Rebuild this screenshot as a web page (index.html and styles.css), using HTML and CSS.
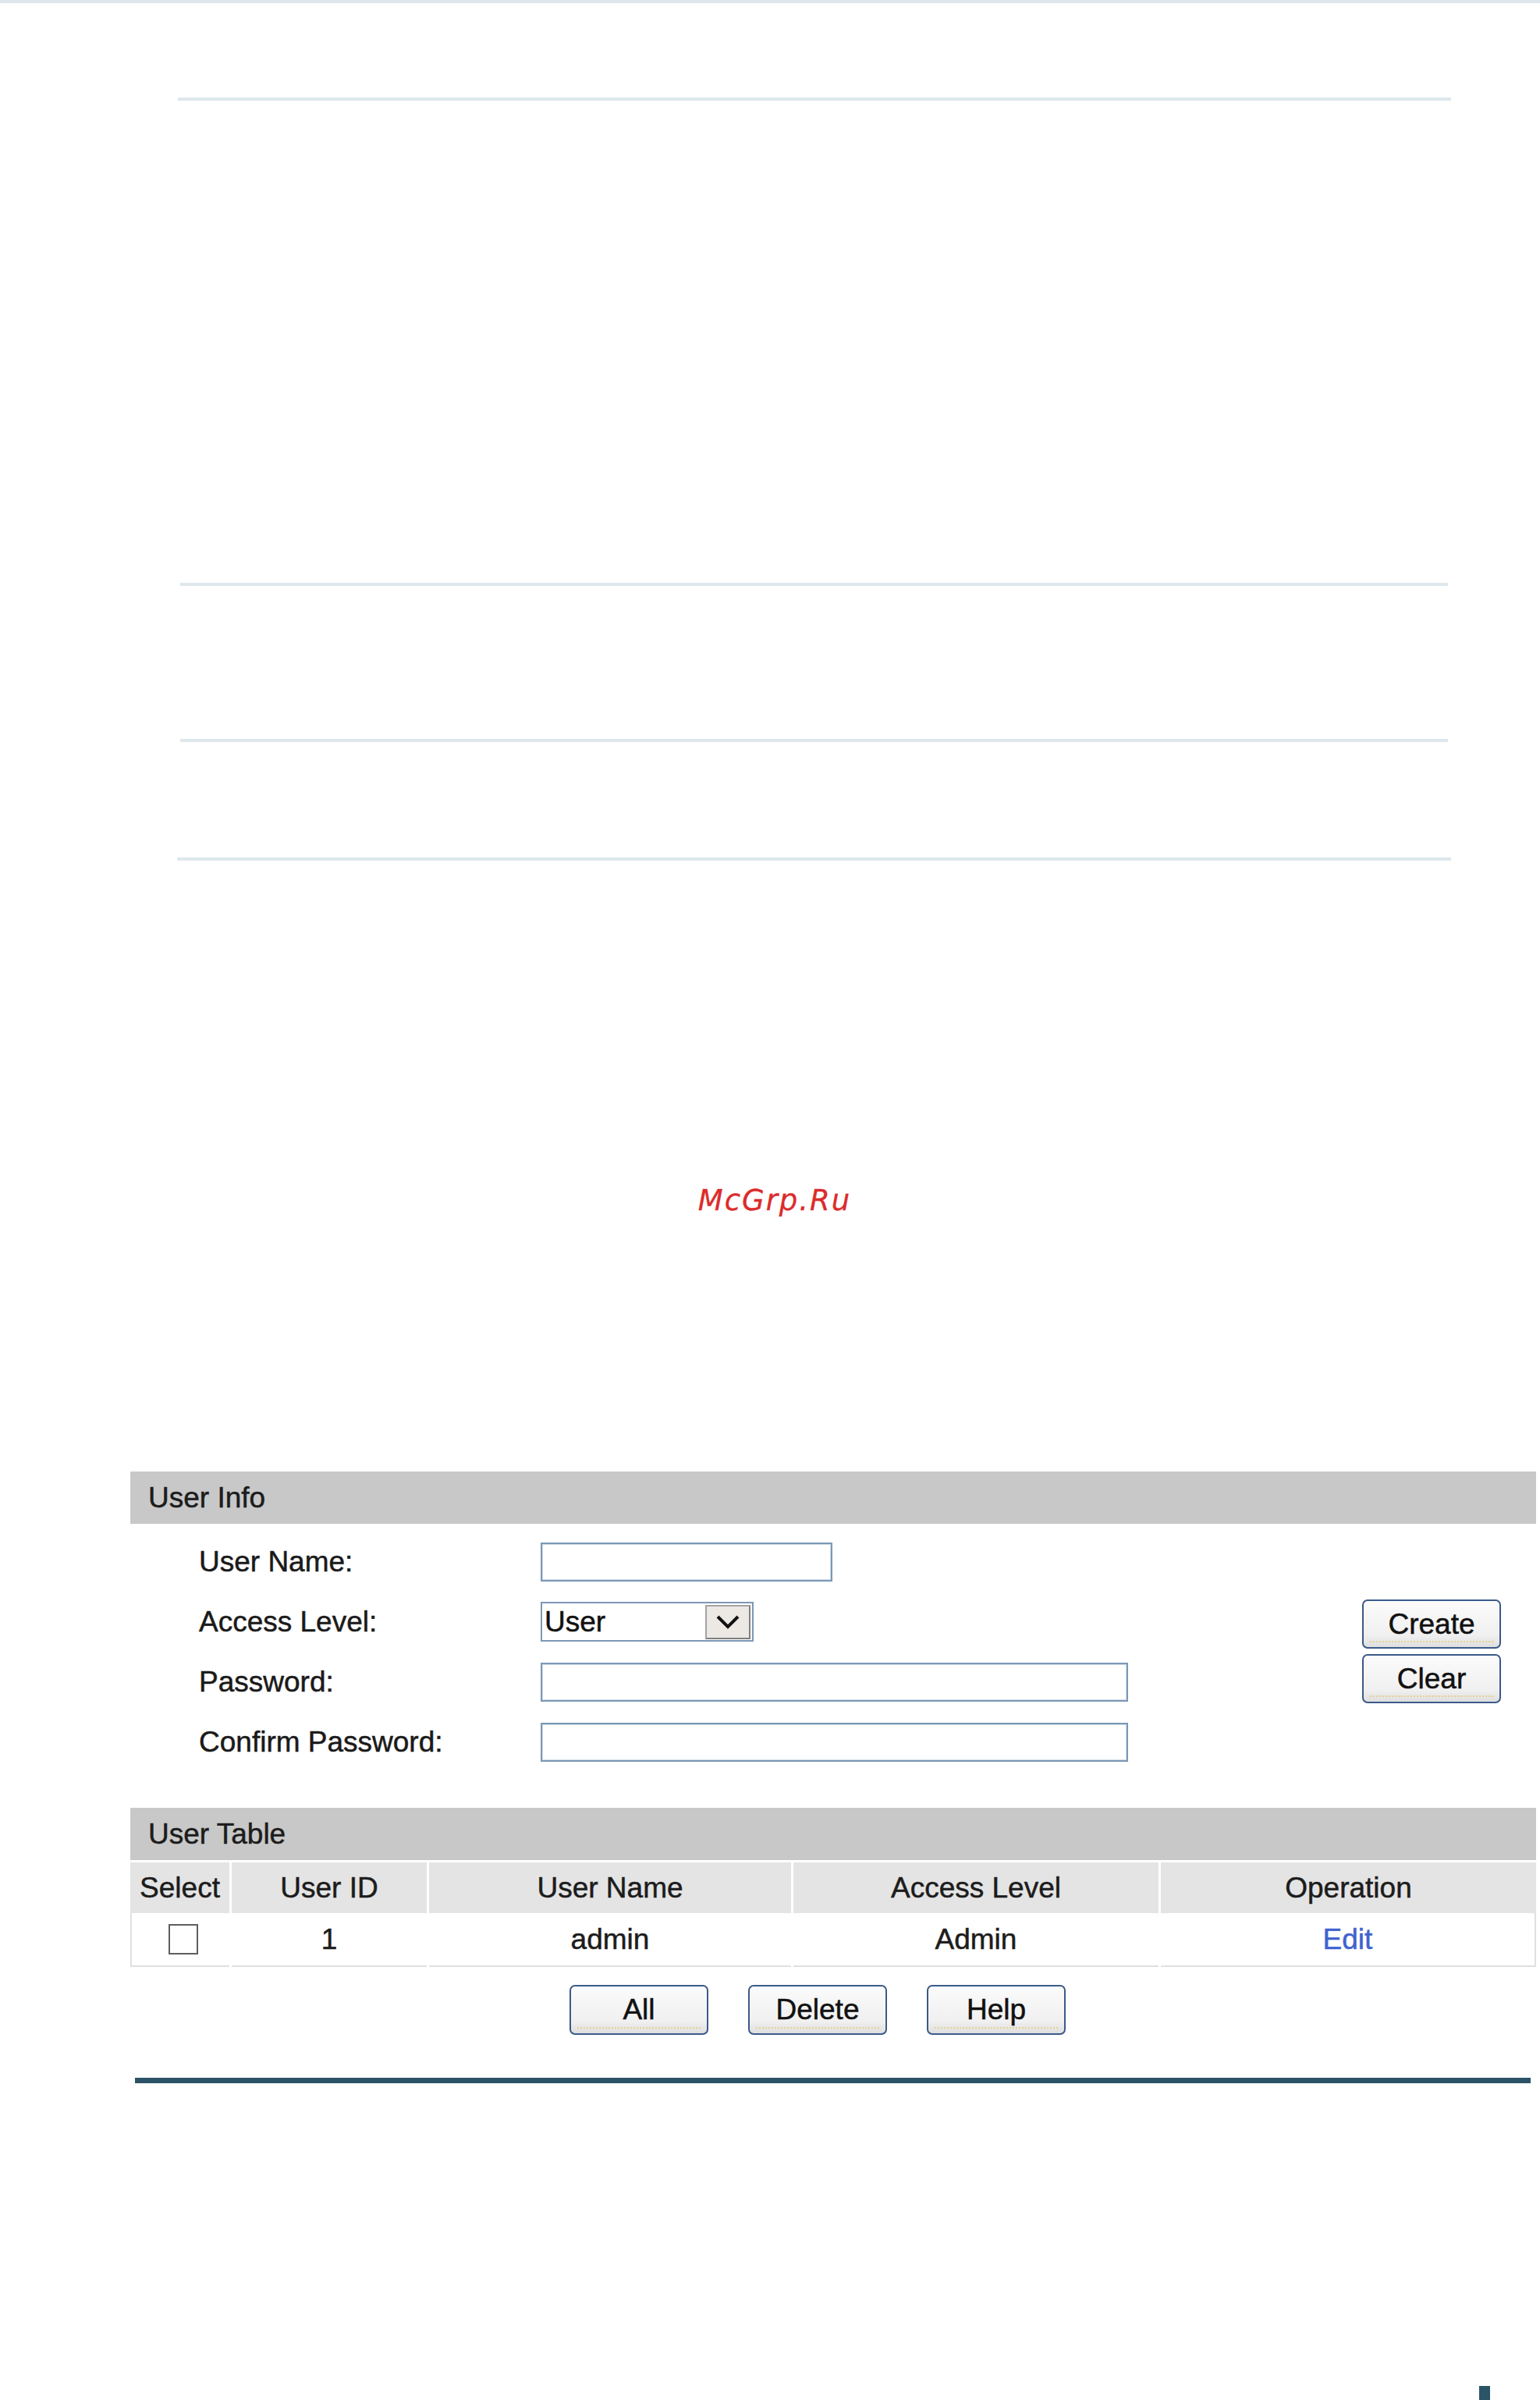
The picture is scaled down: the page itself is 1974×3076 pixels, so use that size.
FILE: index.html
```html
<!DOCTYPE html>
<html lang="en">
<head>
<meta charset="utf-8">
<title>User Config</title>
<link rel="stylesheet" href="styles.css">
</head>
<body>
<div class="page">
  <div class="topline"></div>
  <div class="rule rule-a"></div>
  <div class="rule rule-b"></div>
  <div class="rule rule-c"></div>
  <div class="rule rule-d"></div>
  <div class="watermark">McGrp.Ru</div>

  <div class="panel">
    <div class="bar">User Info</div>
    <div class="info">
      <div class="form">
        <div class="label">User Name:</div>
        <div class="field"><div class="input w-name"></div></div>
        <div class="label">Access Level:</div>
        <div class="field">
          <div class="select">
            <span class="select-text">User</span>
            <span class="select-arrow">
              <svg width="30" height="18" viewBox="0 0 30 18"><polyline points="2,2 15,15 28,2" fill="none" stroke="#111" stroke-width="4"/></svg>
            </span>
          </div>
        </div>
        <div class="label">Password:</div>
        <div class="field"><div class="input w-long"></div></div>
        <div class="label">Confirm Password:</div>
        <div class="field"><div class="input w-long"></div></div>
      </div>
      <div class="side-buttons">
        <div class="btn">Create</div>
        <div class="btn">Clear</div>
      </div>
    </div>

    <div class="bar bar-table">User Table</div>
    <div class="table">
      <div class="th c-first">Select</div>
      <div class="th">User ID</div>
      <div class="th">User Name</div>
      <div class="th">Access Level</div>
      <div class="th c-last">Operation</div>
      <div class="td c-first"><span class="checkbox"></span></div>
      <div class="td">1</div>
      <div class="td">admin</div>
      <div class="td">Admin</div>
      <div class="td c-last"><span class="link">Edit</span></div>
    </div>
    <div class="table-buttons">
      <div class="btn">All</div>
      <div class="btn">Delete</div>
      <div class="btn">Help</div>
    </div>
  </div>

  <div class="darkline"></div>
  <div class="corner"></div>
</div>
</body>
</html>
```

FILE: styles.css
```css
html, body {
  margin: 0;
  padding: 0;
  background: #ffffff;
}

.page {
  width: 1974px;
  height: 3076px;
  overflow: hidden;
  font-family: "Liberation Sans", Arial, sans-serif;
  font-size: 37px;
  color: #1a1a1a;
  -webkit-text-stroke: 0.5px currentColor;
}

.topline {
  height: 4px;
  background: #dde7ec;
}

.rule {
  height: 4px;
  background: #dde7ec;
}

.rule-a {
  margin: 121px 0 0 228px;
  width: 1632px;
}

.rule-b {
  margin: 618px 0 0 231px;
  width: 1625px;
}

.rule-c {
  margin: 196px 0 0 231px;
  width: 1625px;
}

.rule-d {
  margin: 148px 0 0 227px;
  width: 1633px;
}

.watermark {
  margin-top: 417px;
  height: 38px;
  line-height: 38px;
  padding-left: 12px;
  text-align: center;
  font-family: "DejaVu Sans", Verdana, sans-serif;
  font-style: italic;
  font-size: 37px;
  letter-spacing: 2px;
  color: #dc2b2b;
  -webkit-text-stroke: 0.3px currentColor;
}

.panel {
  margin: 328px 0 0 167px;
  width: 1802px;
}

.bar {
  height: 67px;
  background: #c8c8c8;
  display: flex;
  align-items: center;
  padding-left: 23px;
  color: #1c1c1c;
}

.info {
  display: flex;
  justify-content: space-between;
  padding: 23px 45px 59px 88px;
}

.form {
  display: grid;
  grid-template-columns: 438px auto;
  grid-auto-rows: 51px;
  row-gap: 26px;
  align-items: center;
}

.label {
  line-height: 51px;
}

.field {
  display: flex;
  align-items: center;
}

.input {
  height: 50px;
  box-sizing: border-box;
  border: 2px solid #7c98b6;
  box-shadow: inset 0 0 0 1px #cfdbe6;
  background: #ffffff;
}

.w-name {
  width: 374px;
}

.w-long {
  width: 753px;
}

.select {
  width: 273px;
  height: 51px;
  box-sizing: border-box;
  border: 2px solid #7c98b6;
  display: flex;
  align-items: center;
  background: #ffffff;
}

.select-text {
  flex: 1;
  padding-left: 3px;
  color: #111;
}

.select-arrow {
  width: 58px;
  height: 44px;
  box-sizing: border-box;
  margin-right: 2px;
  background: #ece9e5;
  border: 2px solid #a3a3a3;
  border-right-color: #808080;
  border-bottom-color: #808080;
  display: flex;
  align-items: center;
  justify-content: center;
}

.side-buttons {
  display: flex;
  flex-direction: column;
  gap: 7px;
  padding-top: 74px;
}

.btn {
  position: relative;
  width: 178px;
  height: 63px;
  box-sizing: border-box;
  border: 2px solid #3b5a8a;
  border-radius: 7px;
  background: linear-gradient(#fbfbfb, #f0f0f0 75%, #dedede);
  display: flex;
  align-items: center;
  justify-content: center;
  color: #111;
}

.btn::after {
  content: "";
  position: absolute;
  left: 8px;
  right: 8px;
  bottom: 6px;
  border-bottom: 2px dotted #e5d38e;
}

.bar-table {
  margin-bottom: 3px;
}

.table {
  display: grid;
  grid-template-columns: 127px 250px 464px 468px 1fr;
  column-gap: 3px;
}

.th {
  height: 65px;
  background: #e4e4e4;
  display: flex;
  align-items: center;
  justify-content: center;
  color: #1c1c1c;
}

.td {
  height: 69px;
  box-sizing: border-box;
  border-bottom: 2px solid #e0e0e0;
  display: flex;
  align-items: center;
  justify-content: center;
  color: #1c1c1c;
}

.td.c-first {
  border-left: 2px solid #e0e0e0;
}

.td.c-last {
  border-right: 2px solid #e0e0e0;
}

.checkbox {
  display: block;
  width: 38px;
  height: 39px;
  box-sizing: border-box;
  border: 2px solid #5e5e5e;
  background: #ffffff;
  margin-left: 6px;
}

.link {
  color: #3f63cf;
}

.table-buttons {
  display: flex;
  gap: 51px;
  padding: 23px 0 0 563px;
}

.table-buttons .btn {
  height: 64px;
}

.darkline {
  margin: 55px 0 0 173px;
  width: 1789px;
  height: 7px;
  background: #2b5266;
}

.corner {
  margin: 388px 0 0 1896px;
  width: 14px;
  height: 20px;
  background: #2b5567;
}
```
